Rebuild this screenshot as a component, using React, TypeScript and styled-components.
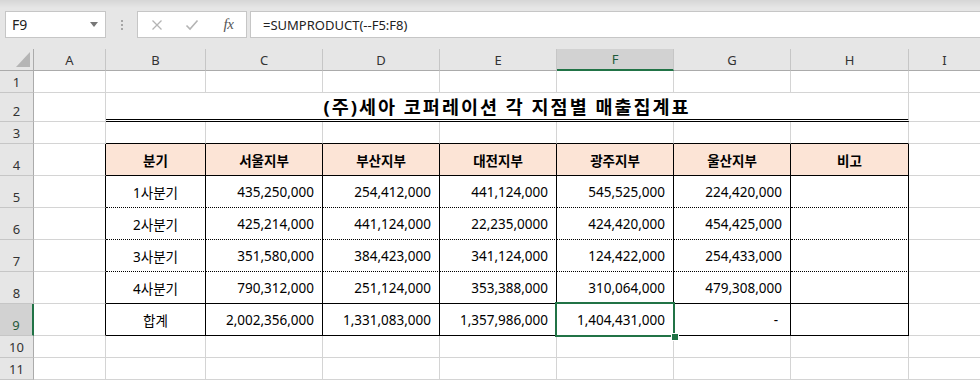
import React from 'react'
import styled, { createGlobalStyle } from 'styled-components'

type Line = 'grid' | 'solid' | 'dotted' | 'double'
type Align = 'left' | 'center' | 'right'

const lineCss = (l: Line) =>
    l === 'solid' ? '1px solid #000'
        : l === 'dotted' ? '1px dotted #000'
            : l === 'double' ? '3px double #000'
                : '1px solid #d4d4d4'

const COLS = ['A', 'B', 'C', 'D', 'E', 'F', 'G', 'H', 'I']
const ACTIVE_COL = 'F'
const ACTIVE_ROW = 9

const BRANCHES = ['서울지부', '부산지부', '대전지부', '광주지부', '울산지부']

const DATA: [string, string[]][] = [
    ['1사분기', ['435,250,000', '254,412,000', '441,124,000', '545,525,000', '224,420,000']],
    ['2사분기', ['425,214,000', '441,124,000', '22,235,0000', '424,420,000', '454,425,000']],
    ['3사분기', ['351,580,000', '384,423,000', '341,124,000', '124,422,000', '254,433,000']],
    ['4사분기', ['790,312,000', '251,124,000', '353,388,000', '310,064,000', '479,308,000']],
    ['합계', ['2,002,356,000', '1,331,083,000', '1,357,986,000', '1,404,431,000', '-']],
]

const GlobalStyle = createGlobalStyle`
    html, body {
        margin: 0;
        padding: 0;
        background: #fff;
        overflow: hidden;
    }
    body {
        font-family: 'Noto Sans', 'Noto Sans CJK KR', sans-serif;
        color: #000;
    }
`

const Window = styled.div`
    width: 980px;
    height: 380px;
    overflow: hidden;
    background: #fff;
`

const FormulaBar = styled.div`
    display: flex;
    align-items: flex-start;
    height: 49px;
    box-sizing: border-box;
    padding: 11px 0 0 5px;
    background: linear-gradient(#d6d6d6 0, #e6e6e6 8px, #e6e6e6 100%);
`

const NameBox = styled.div`
    width: 101px;
    height: 27px;
    box-sizing: border-box;
    border: 1px solid #c6c6c6;
    background: #fff;
    display: flex;
    align-items: center;
    justify-content: space-between;
    padding: 0 7px 0 6px;
    font-size: 14px;
    color: #222;
`

const Grip = styled.div`
    width: 31px;
    height: 27px;
    display: flex;
    flex-direction: column;
    align-items: center;
    justify-content: center;
    gap: 2px;

    span {
        width: 2px;
        height: 2px;
        background: #a6a6a6;
    }
`

const FxGroup = styled.div`
    width: 110px;
    height: 27px;
    box-sizing: border-box;
    border: 1px solid #c6c6c6;
    background: #fff;
    display: flex;
    align-items: center;
    gap: 21px;
    padding-left: 12px;
`

const IconSlot = styled.div`
    width: 14px;
    height: 14px;
    display: flex;
    align-items: center;
    justify-content: center;
`

const FxText = styled.span`
    font-family: 'Liberation Serif', serif;
    font-style: italic;
    font-size: 15px;
    color: #555;
    letter-spacing: -0.5px;
    margin-left: 3px;
`

const FormulaInput = styled.div`
    flex: 1;
    margin-left: 3px;
    height: 27px;
    box-sizing: border-box;
    border: 1px solid #c6c6c6;
    border-right: none;
    background: #fff;
    display: flex;
    align-items: center;
    padding-left: 12px;
    font-size: 13px;
    color: #222;
`

const Sheet = styled.div`
    display: grid;
    grid-template-columns: 34px 72px 100px repeat(5, 117px) 118px 72px;
    grid-template-rows: 22px 22px 29px 22px repeat(6, 32px) 22px 22px;
`

const Corner = styled.div`
    position: relative;
    background: #e6e6e6;
    box-sizing: border-box;
    border-right: 1px solid #ababab;
    border-bottom: 1px solid #ababab;
`

const ColHead = styled.div<{ $active?: boolean }>`
    background: ${p => (p.$active ? '#d2d2d2' : '#e6e6e6')};
    box-sizing: border-box;
    border-right: 1px solid #c6c6c6;
    border-bottom: ${p => (p.$active ? '2px solid #217346' : '1px solid #ababab')};
    display: flex;
    align-items: center;
    justify-content: center;
    font-size: 13px;
    color: ${p => (p.$active ? '#1f5a3a' : '#333')};
`

const RowHead = styled.div<{ $active?: boolean }>`
    background: ${p => (p.$active ? '#d2d2d2' : '#e6e6e6')};
    box-sizing: border-box;
    border-right: ${p => (p.$active ? '2px solid #217346' : '1px solid #ababab')};
    border-bottom: 1px solid #c6c6c6;
    display: flex;
    align-items: flex-end;
    justify-content: center;
    padding-bottom: 1px;
    font-size: 13px;
    line-height: 18px;
    color: ${p => (p.$active ? '#1f5a3a' : '#333')};
`

const Cell = styled.div<{ $right?: Line; $bottom?: Line; $align?: Align; $fill?: string; $bold?: boolean; $pr?: number }>`
    position: relative;
    box-sizing: border-box;
    display: flex;
    align-items: center;
    justify-content: ${p => (p.$align === 'right' ? 'flex-end' : p.$align === 'center' ? 'center' : 'flex-start')};
    padding: 0 ${p => p.$pr ?? 8}px 0 8px;
    border-right: ${p => lineCss(p.$right ?? 'grid')};
    border-bottom: ${p => lineCss(p.$bottom ?? 'grid')};
    background: ${p => p.$fill ?? '#fff'};
    font-size: 13.5px;
    font-weight: ${p => (p.$bold ? 700 : 400)};
    white-space: nowrap;
`

const TitleCell = styled(Cell)`
    grid-column: span 7;
    font-size: 18.5px;
    letter-spacing: 2px;
    padding-bottom: 1px;
`

const Selection = styled.div`
    position: absolute;
    top: -2px;
    left: -2px;
    right: -2px;
    bottom: -2px;
    border: 2px solid #217346;
    z-index: 2;
    pointer-events: none;
`

const FillHandle = styled.div`
    position: absolute;
    right: -5px;
    bottom: -5px;
    width: 6px;
    height: 6px;
    background: #217346;
    outline: 1px solid #fff;
`

const CloseIcon = () => (
    <svg width="12" height="12" viewBox="0 0 12 12" fill="none" stroke="#b4b4b4" strokeWidth="1.3">
        <path d="M1.5 1.5L10.5 10.5M10.5 1.5L1.5 10.5" />
    </svg>
)

const CheckIcon = () => (
    <svg width="14" height="12" viewBox="0 0 14 12" fill="none" stroke="#b4b4b4" strokeWidth="1.6">
        <path d="M1.5 6.5L5 10L12.5 1.5" />
    </svg>
)

const DropArrow = () => (
    <svg width="8" height="5" viewBox="0 0 8 5">
        <path d="M0 0H8L4 5Z" fill="#777" />
    </svg>
)

const CornerTriangle = styled.svg`
    position: absolute;
    right: 3px;
    bottom: 3px;
`

// borders of a body cell, by sheet row number and column index (0 = A)
const bordersFor = (row: number, col: number): { right: Line; bottom: Line } => {
    const inTable = col >= 1 && col <= 7
    let right: Line = 'grid'
    let bottom: Line = 'grid'
    if (row >= 4 && row <= 9 && col <= 7) right = 'solid'
    if (inTable) {
        if (row === 3 || row === 4 || row === 8 || row === 9) bottom = 'solid'
        if (row >= 5 && row <= 7) bottom = 'dotted'
    }
    return { right, bottom }
}

const plainRow = (row: number) =>
    COLS.map((_, c) => {
        const b = bordersFor(row, c)
        return <Cell key={c} $right={b.right} $bottom={b.bottom} />
    })

export default function App() {
    return (
        <Window>
            <GlobalStyle />
            <FormulaBar>
                <NameBox>
                    <span>F9</span>
                    <DropArrow />
                </NameBox>
                <Grip>
                    <span />
                    <span />
                    <span />
                </Grip>
                <FxGroup>
                    <IconSlot><CloseIcon /></IconSlot>
                    <IconSlot><CheckIcon /></IconSlot>
                    <IconSlot><FxText>fx</FxText></IconSlot>
                </FxGroup>
                <FormulaInput>=SUMPRODUCT(--F5:F8)</FormulaInput>
            </FormulaBar>

            <Sheet>
                <Corner>
                    <CornerTriangle width="14" height="15" viewBox="0 0 14 15">
                        <path d="M14 0V15H0Z" fill="#b5b5b5" />
                    </CornerTriangle>
                </Corner>
                {COLS.map(c => (
                    <ColHead key={c} $active={c === ACTIVE_COL}>{c}</ColHead>
                ))}

                <RowHead>1</RowHead>
                {plainRow(1)}

                <RowHead>2</RowHead>
                <Cell />
                <TitleCell $bottom="double" $align="center" $bold>
                    (주)세아 코퍼레이션 각 지점별 매출집계표
                </TitleCell>
                <Cell />

                <RowHead>3</RowHead>
                {plainRow(3)}

                <RowHead>4</RowHead>
                <Cell $right="solid" />
                <Cell $right="solid" $bottom="solid" $align="center" $fill="#fce4d6" $bold>분기</Cell>
                {BRANCHES.map(b => (
                    <Cell key={b} $right="solid" $bottom="solid" $align="center" $fill="#fce4d6" $bold>{b}</Cell>
                ))}
                <Cell $right="solid" $bottom="solid" $align="center" $fill="#fce4d6" $bold>비고</Cell>
                <Cell />

                {DATA.map(([label, values], i) => {
                    const row = 5 + i
                    const b = bordersFor(row, 1)
                    return (
                        <React.Fragment key={label}>
                            <RowHead $active={row === ACTIVE_ROW}>{row}</RowHead>
                            <Cell $right="solid" />
                            <Cell $right={b.right} $bottom={b.bottom} $align="center">{label}</Cell>
                            {values.map((v, j) => {
                                const selected = row === ACTIVE_ROW && j === 3
                                return (
                                    <Cell key={j} $right={b.right} $bottom={b.bottom} $align="right" $pr={v === '-' ? 12 : 8}>
                                        {v}
                                        {selected && (
                                            <Selection>
                                                <FillHandle />
                                            </Selection>
                                        )}
                                    </Cell>
                                )
                            })}
                            <Cell $right={b.right} $bottom={b.bottom} />
                            <Cell />
                        </React.Fragment>
                    )
                })}

                <RowHead>10</RowHead>
                {plainRow(10)}
                <RowHead>11</RowHead>
                {plainRow(11)}
            </Sheet>
        </Window>
    )
}
